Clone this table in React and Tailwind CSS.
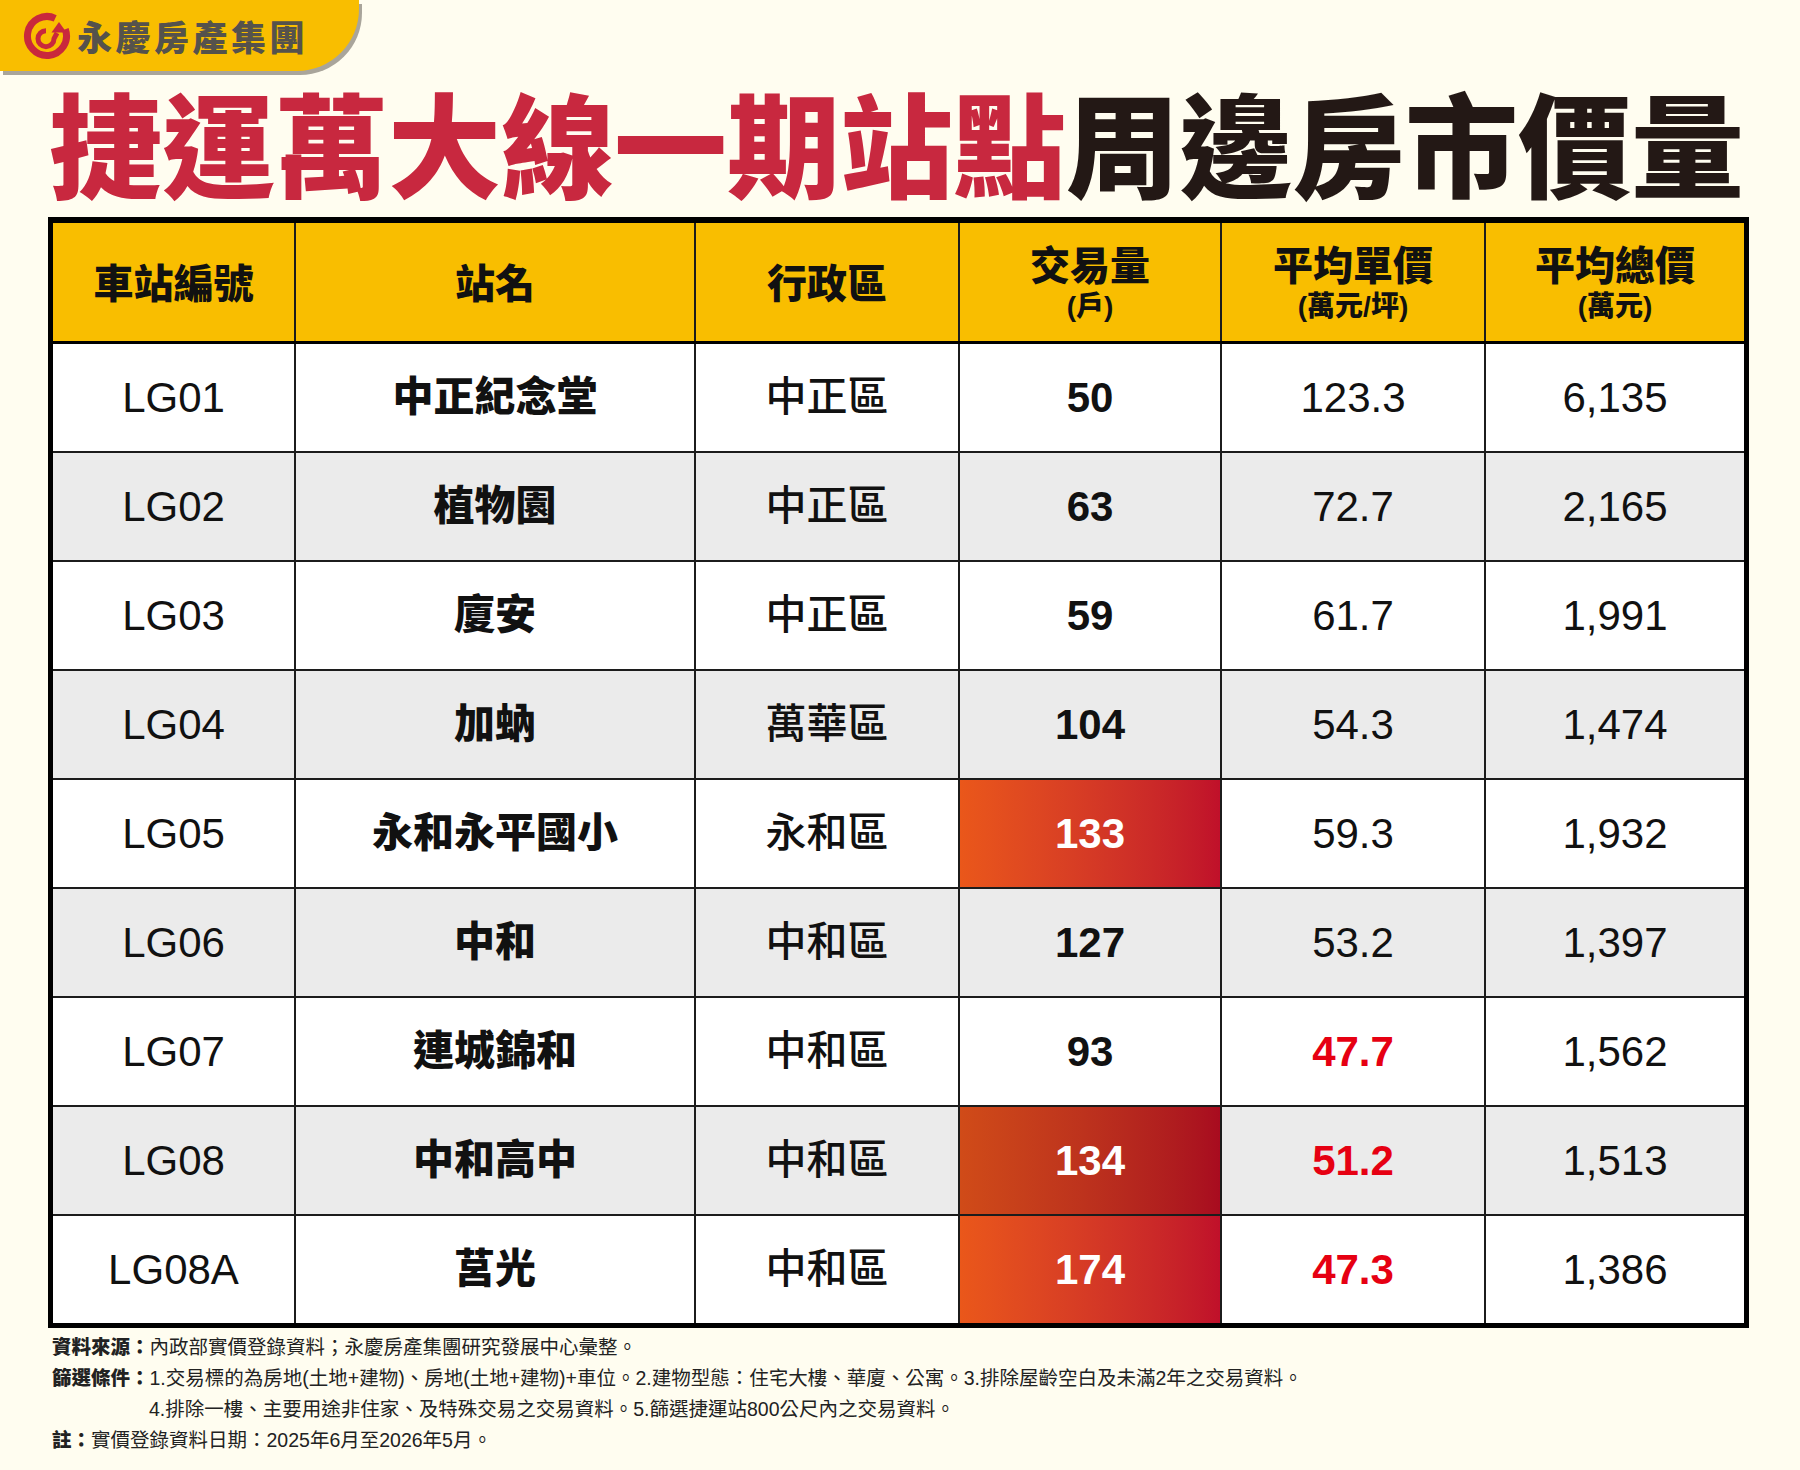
import React from 'react';

const rows = [
  { code: 'LG01', name: '中正紀念堂', area: '中正區', qty: '50', unit: '123.3', total: '6,135' },
  { code: 'LG02', name: '植物園', area: '中正區', qty: '63', unit: '72.7', total: '2,165' },
  { code: 'LG03', name: '廈安', area: '中正區', qty: '59', unit: '61.7', total: '1,991' },
  { code: 'LG04', name: '加蚋', area: '萬華區', qty: '104', unit: '54.3', total: '1,474' },
  { code: 'LG05', name: '永和永平國小', area: '永和區', qty: '133', unit: '59.3', total: '1,932', hot: 'a' },
  { code: 'LG06', name: '中和', area: '中和區', qty: '127', unit: '53.2', total: '1,397' },
  { code: 'LG07', name: '連城錦和', area: '中和區', qty: '93', unit: '47.7', total: '1,562', low: true },
  { code: 'LG08', name: '中和高中', area: '中和區', qty: '134', unit: '51.2', total: '1,513', hot: 'b', low: true },
  { code: 'LG08A', name: '莒光', area: '中和區', qty: '174', unit: '47.3', total: '1,386', hot: 'a', low: true },
];

const cols = 'grid grid-cols-[241px_398px_262px_260px_262px_258px] gap-x-[2px]';

function Logo() {
  return (
    <div className="w-[359px] h-[71px] bg-[#f9be00] rounded-br-[62px] shadow-[3px_4px_0_#a9a59b] flex items-center pl-[23px] gap-[6px]">
      <svg width="48" height="48" viewBox="0 0 48 48">
        {/* outer ring, open at upper right */}
        <path d="M42.3 17.3 A19.5 19.5 0 1 1 32.2 6.3" fill="none" stroke="#c9283c" strokeWidth="7" />
        {/* inner ring running into the arrow stem */}
        <path d="M23 18.7 A8 8 0 1 0 31 26.7 L34 21" fill="none" stroke="#c9283c" strokeWidth="5" strokeLinejoin="round" />
        <path d="M36 10 L43.5 20.5 L28.5 20.5 Z" fill="#c9283c" />
      </svg>
      <span className="text-[35px] leading-none font-black tracking-[3.5px] text-[#55524c] font-['Noto_Sans_CJK_TC',sans-serif]">
        永慶房產集團
      </span>
    </div>
  );
}

function HeadCell({ main, sub }) {
  return (
    <div className="bg-[#f9be00] flex flex-col items-center justify-center h-[118px] pt-[4px]">
      <div className="text-[40px] leading-[46px] font-black">{main}</div>
      {sub && <div className="text-[28px] leading-[36px] font-black">{sub}</div>}
    </div>
  );
}

export default function App() {
  return (
    <div className="w-[1800px] h-[1470px] bg-[#fffdf0] overflow-hidden text-[#111] font-['Liberation_Sans','Noto_Sans_CJK_TC',sans-serif]">
      <Logo />

      <h1 className="mt-[13px] pl-[49px] h-[112px] text-[113px] leading-none font-black whitespace-nowrap font-['Noto_Sans_CJK_TC',sans-serif]">
        <span className="text-[#c8283f]">捷運萬大線一期站點</span>
        <span className="text-[#231815]">周邊房市價量</span>
      </h1>

      <div className="mt-[21px] ml-[48px] w-[1701px] border-[5px] border-t-[6px] border-black bg-[#1c1c1c]">
        <div className={cols}>
          <HeadCell main="車站編號" />
          <HeadCell main="站名" />
          <HeadCell main="行政區" />
          <HeadCell main="交易量" sub="(戶)" />
          <HeadCell main="平均單價" sub="(萬元/坪)" />
          <HeadCell main="平均總價" sub="(萬元)" />
        </div>
        <div className={`${cols} gap-y-[2px] border-t-[3px] border-black`}>
          {rows.map((r, i) => {
            const bg = i % 2 === 1 ? 'bg-[#ebebeb]' : 'bg-white';
            const base = 'h-[107px] flex items-center justify-center leading-none';
            const cell = `${bg} ${base} text-[42px]`;
            let qtyCls = `${cell} font-bold`;
            if (r.hot === 'a') qtyCls = `${base} text-[42px] font-bold text-white bg-linear-to-r from-[#ea571a] to-[#c0102a]`;
            if (r.hot === 'b') qtyCls = `${base} text-[42px] font-bold text-white bg-linear-to-r from-[#d04b18] to-[#a80b1f]`;
            return (
              <React.Fragment key={r.code}>
                <div className={cell}>{r.code}</div>
                <div className={`${bg} ${base} text-[41px] font-black`}>{r.name}</div>
                <div className={`${bg} ${base} text-[41px] font-medium`}>{r.area}</div>
                <div className={qtyCls}>{r.qty}</div>
                <div className={`${cell} ${r.low ? 'font-bold text-[#e60012]' : ''}`}>{r.unit}</div>
                <div className={cell}>{r.total}</div>
              </React.Fragment>
            );
          })}
        </div>
      </div>

      <div className="mt-[4px] pl-[52px] text-[19.5px] leading-[31px] text-[#222]">
        <p><b className="font-black">資料來源：</b>內政部實價登錄資料；永慶房產集團研究發展中心彙整。</p>
        <p><b className="font-black">篩選條件：</b>1.交易標的為房地(土地+建物)、房地(土地+建物)+車位。2.建物型態：住宅大樓、華廈、公寓。3.排除屋齡空白及未滿2年之交易資料。</p>
        <p className="pl-[97px]">4.排除一樓、主要用途非住家、及特殊交易之交易資料。5.篩選捷運站800公尺內之交易資料。</p>
        <p><b className="font-black">註：</b>實價登錄資料日期：2025年6月至2026年5月。</p>
      </div>
    </div>
  );
}
